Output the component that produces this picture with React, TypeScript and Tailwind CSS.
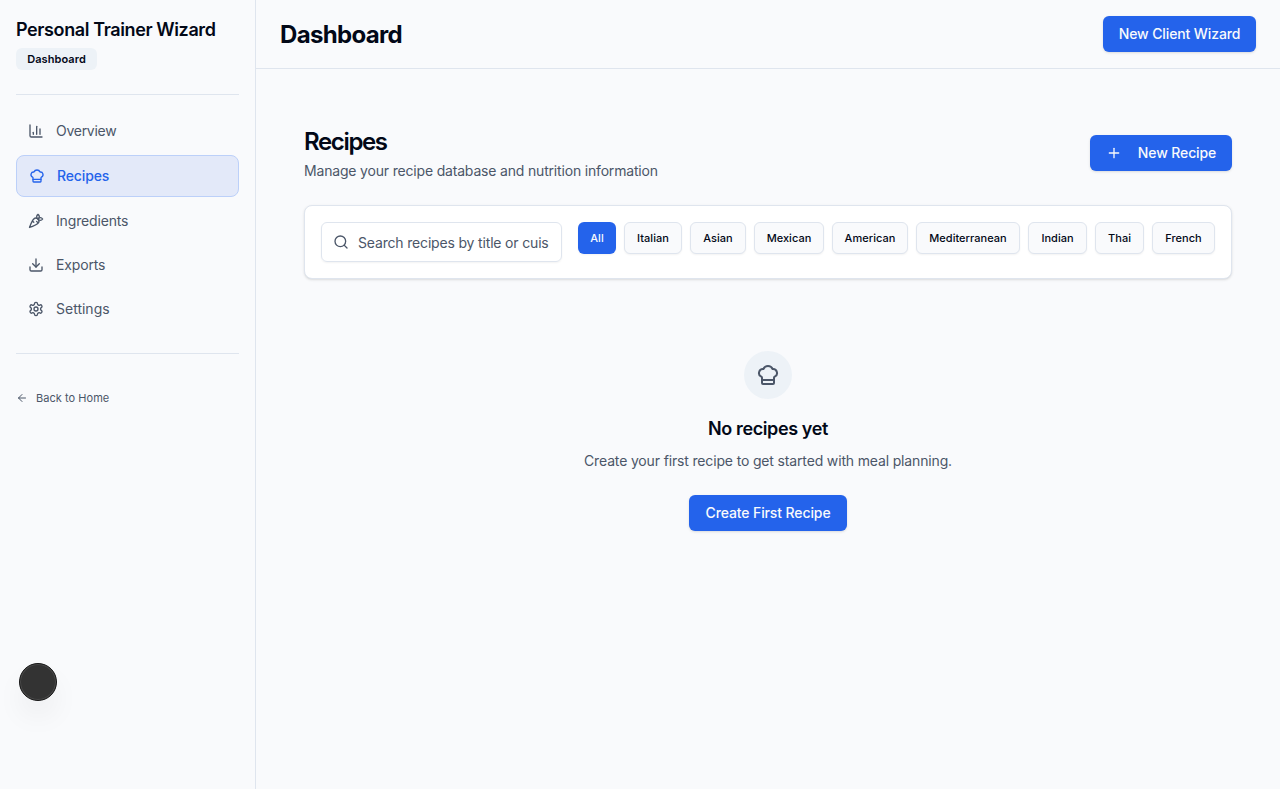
import { ArrowLeft, Carrot, ChartColumn, ChefHat, Download, Plus, Search } from 'lucide-react';

function Gear({ className }: { className?: string }) {
  return (
    <svg
      className={className}
      viewBox="0 0 24 24"
      fill="none"
      stroke="currentColor"
      strokeWidth="2"
      strokeLinecap="round"
      strokeLinejoin="round"
    >
      <path d="M12.22 2h-.44a2 2 0 0 0-2 2v.18a2 2 0 0 1-1 1.73l-.43.25a2 2 0 0 1-2 0l-.15-.08a2 2 0 0 0-2.73.73l-.22.38a2 2 0 0 0 .73 2.73l.15.1a2 2 0 0 1 1 1.72v.51a2 2 0 0 1-1 1.74l-.15.09a2 2 0 0 0-.73 2.73l.22.38a2 2 0 0 0 2.73.73l.15-.08a2 2 0 0 1 2 0l.43.25a2 2 0 0 1 1 1.73V20a2 2 0 0 0 2 2h.44a2 2 0 0 0 2-2v-.18a2 2 0 0 1 1-1.73l.43-.25a2 2 0 0 1 2 0l.15.08a2 2 0 0 0 2.73-.73l.22-.39a2 2 0 0 0-.73-2.73l-.15-.08a2 2 0 0 1-1-1.74v-.5a2 2 0 0 1 1-1.74l.15-.09a2 2 0 0 0 .73-2.73l-.22-.38a2 2 0 0 0-2.73-.73l-.15.08a2 2 0 0 1-2 0l-.43-.25a2 2 0 0 1-1-1.73V4a2 2 0 0 0-2-2z" />
      <circle cx="12" cy="12" r="3" />
    </svg>
  );
}

const NAV = [
  { label: 'Overview', Icon: ChartColumn, tracking: 'tracking-[-0.27px]' },
  { label: 'Recipes', Icon: ChefHat, active: true, tracking: 'tracking-[-0.12px]' },
  { label: 'Ingredients', Icon: Carrot, tracking: 'tracking-[-0.16px]' },
  { label: 'Exports', Icon: Download, tracking: 'tracking-[-0.15px]' },
  { label: 'Settings', Icon: Gear, tracking: 'tracking-normal' },
];

const CUISINES = [
  { label: 'All', width: 'w-[38px]' },
  { label: 'Italian', width: 'w-[58px]' },
  { label: 'Asian', width: 'w-[56px]' },
  { label: 'Mexican', width: 'w-[70px]' },
  { label: 'American', width: 'w-[76px]' },
  { label: 'Mediterranean', width: 'w-[104px]' },
  { label: 'Indian', width: 'w-[59px]' },
  { label: 'Thai', width: 'w-[49px]' },
  { label: 'French', width: 'w-[63px]' },
];

const primaryButton =
  'flex h-9 items-center justify-center rounded-md bg-[#2463eb] text-sm font-medium tracking-[-0.11px] text-[#f8fafc] shadow-sm whitespace-nowrap';

function Sidebar() {
  return (
    <aside className="w-64 shrink-0 border-r border-[#dfe5ee] p-4">
      <div className="text-lg font-semibold tracking-[-0.39px] whitespace-nowrap">Personal Trainer Wizard</div>
      <div className="mt-1 flex h-[22px] w-[81px] items-center justify-center rounded-md bg-[#edf2f7] text-[11px] font-semibold tracking-[0.08px]">
        Dashboard
      </div>
      <div className="mt-6 h-px bg-[#dfe5ee]" />
      <nav className="mt-4 flex flex-col gap-1">
        {NAV.map(({ label, Icon, active, tracking }) => (
          <a
            key={label}
            className={
              active
                ? 'flex h-[42px] items-center gap-3 rounded-lg border border-[#bcd0f9] bg-[#e3e9f9] px-3 text-sm font-medium text-[#2463eb]'
                : 'flex h-10 items-center gap-3 rounded-lg px-3 text-sm text-[#4b5668]'
            }
          >
            <Icon className="size-4" />
            <span className={tracking}>{label}</span>
          </a>
        ))}
      </nav>
      <div className="mt-6 h-px bg-[#dfe5ee]" />
      <a className="mt-9 flex h-4 items-center gap-2 text-[11px] tracking-[0.04px] text-[#4b5668]">
        <ArrowLeft className="size-3" />
        Back to Home
      </a>
    </aside>
  );
}

export default function App() {
  return (
    <div className="relative flex h-[789px] w-full overflow-hidden bg-[#f9fafc] font-['Inter',sans-serif] text-[#020817] antialiased">
      <Sidebar />
      <main className="flex min-w-0 flex-1 flex-col">
        <header className="flex h-[69px] shrink-0 items-center justify-between border-b border-[#dfe5ee] px-6">
          <h1 className="pt-0.5 text-2xl font-bold tracking-[-0.66px]">Dashboard</h1>
          <button className={`${primaryButton} w-[153px]`}>New Client Wizard</button>
        </header>
        <div className="px-12 pt-[57px]">
          <div className="flex items-start justify-between">
            <div>
              <h2 className="text-2xl font-semibold tracking-[-1.35px]">Recipes</h2>
              <p className="mt-[3px] text-sm tracking-[-0.18px] text-[#4b5668]">
                Manage your recipe database and nutrition information
              </p>
            </div>
            <button className={`${primaryButton} mt-[9px] w-[142px] gap-4`}>
              <Plus className="size-4" />
              New Recipe
            </button>
          </div>
          <section className="mt-6 flex h-[74px] items-start gap-4 rounded-lg border border-[#dfe5ee] bg-white p-4 shadow-sm">
            <div className="flex h-10 w-[241px] items-center gap-[9px] rounded-md border border-[#dfe5ee] pr-3 pl-[11px] shadow-xs">
              <Search className="size-4 shrink-0 text-[#4b5668]" />
              <input
                className="min-w-0 flex-1 bg-transparent pt-0.5 text-sm tracking-[-0.17px] outline-none placeholder:text-[#4b5668]"
                placeholder="Search recipes by title or cuisine..."
              />
            </div>
            <div className="flex gap-2">
              {CUISINES.map(({ label, width }, i) => (
                <button
                  key={label}
                  className={`${width} h-8 rounded-md text-[11px] font-medium tracking-[0.03px] shadow-xs ${
                    i === 0 ? 'bg-[#2463eb] text-[#f8fafc]' : 'border border-[#dfe5ee] bg-[#f9fafc]'
                  }`}
                >
                  {label}
                </button>
              ))}
            </div>
          </section>
          <section className="flex flex-col items-center pt-[72px]">
            <div className="flex size-12 items-center justify-center rounded-full bg-[#edf2f7] text-[#4b5668]">
              <ChefHat className="size-6" />
            </div>
            <h3 className="mt-4 text-lg font-semibold tracking-[-0.38px]">No recipes yet</h3>
            <p className="mt-2 text-sm tracking-[-0.155px] text-[#4b5668]">
              Create your first recipe to get started with meal planning.
            </p>
            <button className={`${primaryButton} mt-6 w-[158px]`}>Create First Recipe</button>
          </section>
        </div>
      </main>
      <div className="absolute top-[663px] left-[19px] size-[38px] rounded-full border border-[#171717] bg-[#333333] shadow-[inset_0_0_0_1px_#4a4a4a,0_16px_32px_-8px_rgba(0,0,0,0.14)]" />
    </div>
  );
}
